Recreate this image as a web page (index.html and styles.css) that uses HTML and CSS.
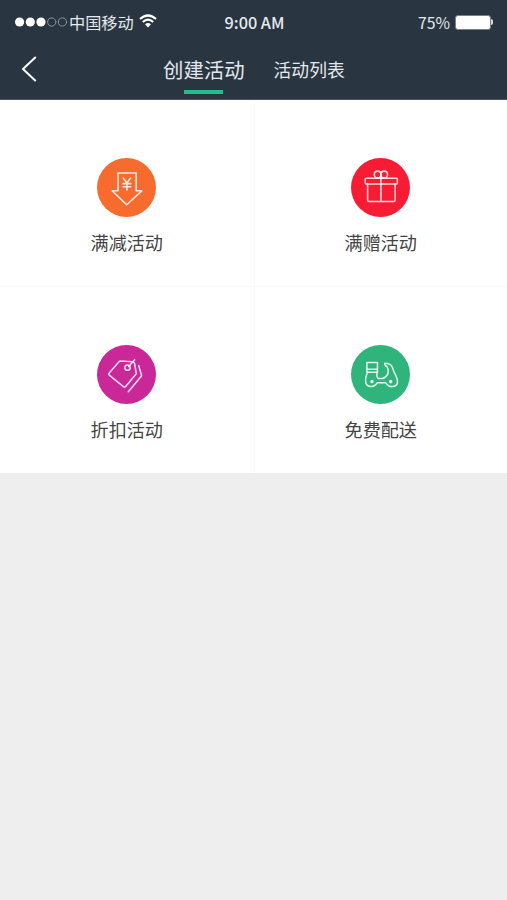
FILE: index.html
```html
<!DOCTYPE html>
<html lang="zh-CN">
<head>
    <meta charset="UTF-8" />
    <meta name="viewport" content="width=device-width, initial-scale=1" />
    <title>创建活动</title>
    <link rel="stylesheet" href="styles.css">
</head>
<body>
<header class="header">
    <div class="status-bar">
        <div class="carrier">
            <svg class="signal" viewBox="0 0 53 10" width="53" height="10">
                <circle class="full" cx="4.6" cy="5" r="4.6" />
                <circle class="full" cx="15.3" cy="5" r="4.6" />
                <circle class="full" cx="26" cy="5" r="4.6" />
                <circle cx="36.8" cy="5" r="4.1" />
                <circle cx="47.5" cy="5" r="4.1" />
            </svg>
            <span class="carrier-name">中国移动</span>
            <svg class="wifi" viewBox="0 0 18 14" width="18" height="14">
                <path d="M1 5 Q9 -2 17 5" />
                <path d="M3.8 8 Q9 3.4 14.2 8" />
                <path class="solid" d="M6 10.2 Q9 7.6 12 10.2 L9 13.6 Z" />
            </svg>
        </div>
        <div class="time">9:00 AM</div>
        <div class="power">
            <span>75%</span>
            <span class="battery"></span>
            <span class="battery-cap"></span>
        </div>
    </div>
    <nav class="nav">
        <a class="back">
            <svg viewBox="0 0 16 26" width="16" height="26"><path d="M14.2 1.5 L2 13 L14.2 24.5" /></svg>
        </a>
        <div class="tabs">
            <div class="tab active">创建活动</div>
            <div class="tab">活动列表</div>
        </div>
    </nav>
</header>

<main class="grid">
    <div class="item">
        <svg class="icon orange" viewBox="0 0 58 58">
            <path d="M20.7 14.7 H38.5 V32.3 H44 L29.2 46 L15 32.3 H20.7 Z" />
            <path d="M25.8 19.6 L29.4 24.6 L33 19.6 M29.4 24.6 V31.6 M25.6 25.2 H33.2 M25.6 28.2 H33.2" />
        </svg>
        <div class="label">满减活动</div>
    </div>
    <div class="item">
        <svg class="icon red" viewBox="0 0 58 58">
            <rect x="14" y="19.8" width="31.6" height="5.8" rx="1" />
            <path d="M16.3 25.6 V41.4 Q16.3 42.8 17.7 42.8 H42 Q43.4 42.8 43.4 41.4 V25.6 M29.4 17 V42.8" />
            <circle cx="26.2" cy="16.2" r="3.3" />
            <circle cx="32.6" cy="16.2" r="3.3" />
        </svg>
        <div class="label">满赠活动</div>
    </div>
    <div class="item">
        <svg class="icon purple" viewBox="0 0 58 58">
            <path d="M22.8 15.8 L34.8 16.4 Q36.6 16.6 37 18.4 L38.6 28.2 L28.4 40.6 Q27.3 42 26 41 L12 29.6 Q11 28.6 12 27.5 L21.4 16.6 Q22 15.8 22.8 15.8 Z" />
            <circle cx="30" cy="22.3" r="2.6" />
            <path d="M31.2 21.2 L37 14.4" />
            <path d="M41 20.3 L43.9 30.3 L30.8 46" />
        </svg>
        <div class="label">折扣活动</div>
    </div>
    <div class="item">
        <svg class="icon green" viewBox="0 0 58 58">
            <path d="M15.6 17.2 H26 V23.8 H15.6 Z" />
            <path d="M26 23.8 V26.8 H15.6 V23.8" />
            <path d="M16.4 26.8 C14.8 30 13.8 34.4 14.8 37.8 C16.2 41.6 22.4 41.8 24.4 38.8 L26 37 H34 L35.8 39 C38.2 42 44.4 41.4 45.6 37.6 C46.4 33.4 44 30 42.2 26.4 C40.6 22.6 41.2 18.2 33.2 18 C33 19.8 33.6 20.6 35.4 21.2 C38 25.6 36.8 30.8 31 33 H27 C25.2 32 25.2 29.6 25.6 26.8" />
            <circle class="wheel" cx="20.6" cy="36" r="1" />
            <circle class="wheel" cx="39" cy="36" r="1" />
        </svg>
        <div class="label">免费配送</div>
    </div>
</main>
</body>
</html>
```

FILE: styles.css
```css
* {
  box-sizing: border-box;
}
body {
  margin: 0;
  min-height: 100vh;
  background: #eeeeee;
  color: #444;
  font-family: "Noto Sans CJK SC", "Noto Sans", sans-serif;
}
svg {
  display: block;
  fill: none;
  stroke: #fff;
  stroke-linecap: round;
  stroke-linejoin: round;
}
.header {
  height: 100px;
  background: #293540;
  border-bottom: 1px solid #4a545d;
  color: #e4e9ee;
}
.status-bar {
  display: grid;
  grid-template-columns: 1fr auto 1fr;
  align-items: center;
  height: 44px;
  padding: 0 14px 0 15px;
}
.carrier {
  display: flex;
  align-items: center;
}
.signal {
  margin-right: 1px;
  stroke: #8a949c;
}
.signal .full {
  fill: #fff;
  stroke: none;
}
.carrier-name {
  font-size: 16.2px;
  line-height: 20px;
}
.wifi {
  margin: -2px 0 0 5px;
  stroke-width: 2.2;
  stroke-linecap: butt;
}
.wifi .solid {
  fill: #fff;
  stroke: none;
}
.time {
  margin-left: 1px;
  font-size: 16.3px;
  font-weight: 500;
}
.power {
  display: flex;
  align-items: center;
  justify-content: flex-end;
  font-size: 15.8px;
}
.battery {
  width: 36px;
  height: 15px;
  margin-left: 5px;
  border: 1px solid #77818a;
  border-radius: 3px;
  background: #fff;
}
.battery-cap {
  width: 2px;
  height: 6px;
  border-radius: 0 2px 2px 0;
  background: #d5dade;
}
.nav {
  display: flex;
  height: 55px;
  padding-left: 21px;
}
.back {
  width: 142px;
  padding-top: 12px;
}
.back svg {
  stroke-width: 2;
}
.tabs {
  display: flex;
  align-items: flex-start;
  gap: 29px;
}
.tab {
  height: 50px;
  font-size: 17.8px;
  line-height: 51px;
}
.tab.active {
  display: flex;
  flex-direction: column;
  align-items: center;
  font-size: 20.4px;
}
.tab.active::after {
  content: "";
  width: 39px;
  height: 4px;
  margin: -5px 1px 0 0;
  background: #23bd88;
}
.grid {
  display: grid;
  grid-template-columns: 1fr 1fr;
  grid-template-rows: 187px 186px;
  background: #fff;
}
.item {
  display: flex;
  flex-direction: column;
  align-items: center;
  padding-top: 57.5px;
}
.item:nth-child(-n+2) {
  border-bottom: 1px solid #fafafa;
}
.item:nth-child(even) {
  border-left: 1px solid #fafafa;
}
.icon {
  width: 59px;
  height: 59px;
  border-radius: 50%;
  stroke: rgba(255, 255, 255, 0.85);
  stroke-width: 1.5;
}
.icon .wheel {
  fill: #fff;
}
.orange {
  background: #f86b2e;
}
.red {
  background: #f71c34;
}
.purple {
  background: #ca2798;
}
.green {
  background: #2fb57c;
}
.label {
  margin-top: 12px;
  font-size: 18.1px;
  line-height: 27px;
}
```
